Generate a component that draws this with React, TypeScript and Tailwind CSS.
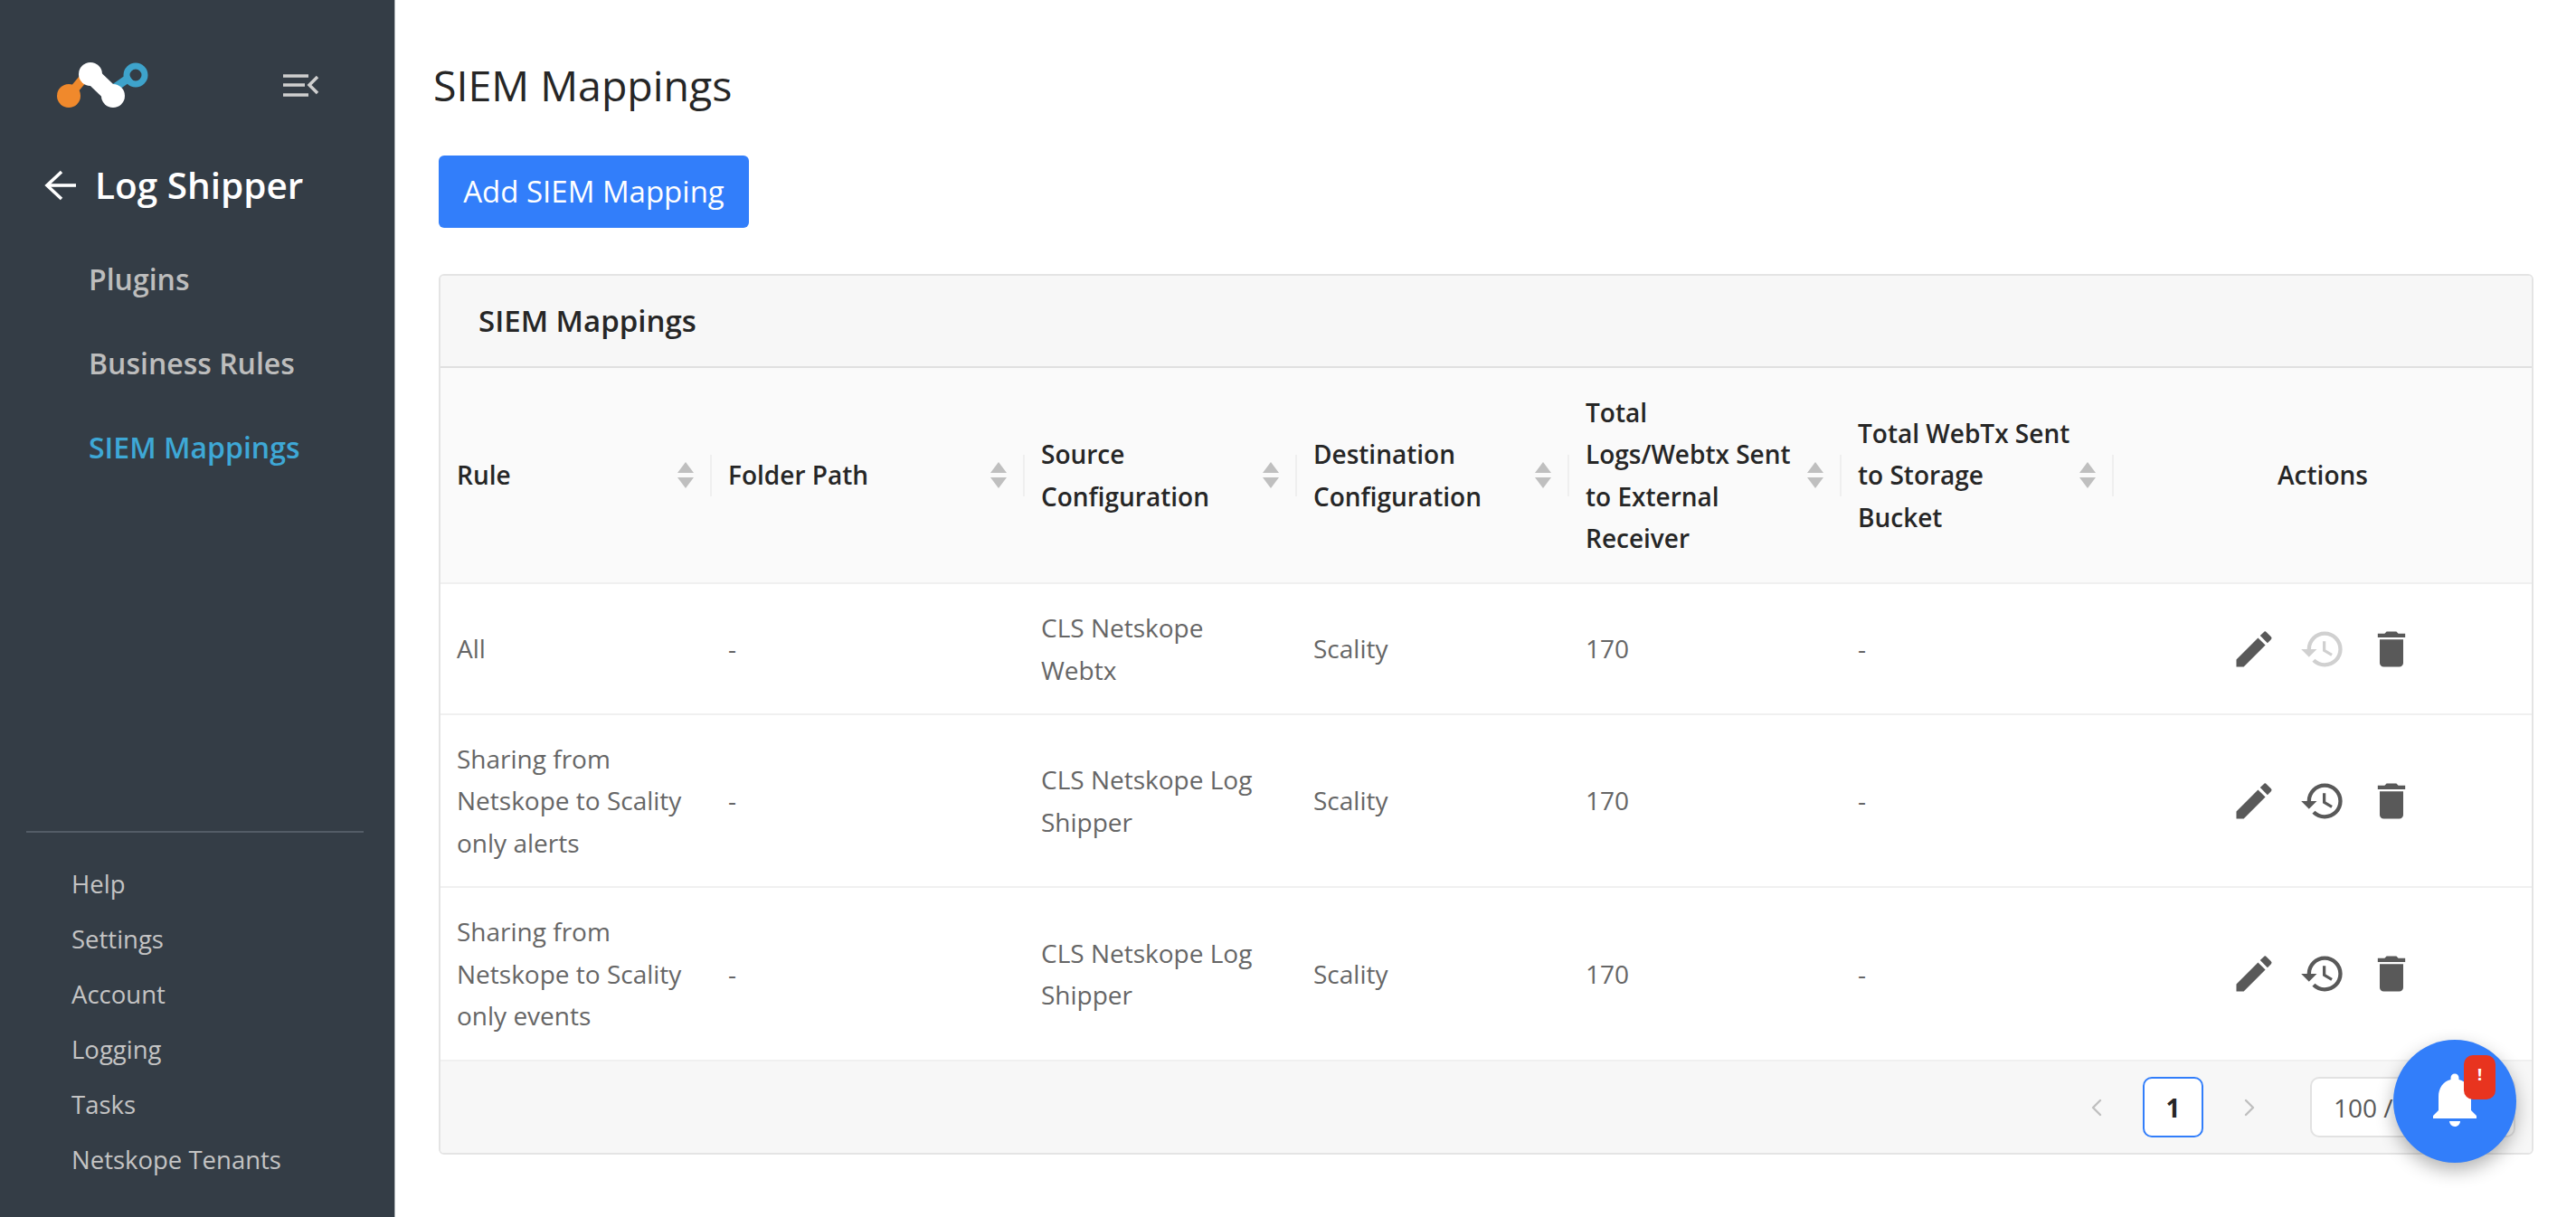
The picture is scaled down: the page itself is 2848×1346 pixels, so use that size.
import { ChevronDown, ChevronLeft, ChevronRight } from "lucide-react";
import { MdDelete, MdEdit, MdHistory, MdNotifications } from "react-icons/md";

const font = { fontFamily: '"Open Sans", sans-serif' };

const navItems = [
  { label: "Plugins" },
  { label: "Business Rules" },
  { label: "SIEM Mappings", active: true },
];

const bottomLinks = ["Help", "Settings", "Account", "Logging", "Tasks", "Netskope Tenants"];

const columns = [
  { label: ["Rule"], width: "w-[300px]" },
  { label: ["Folder Path"], width: "w-[346px]" },
  { label: ["Source", "Configuration"], width: "w-[301px]" },
  { label: ["Destination", "Configuration"], width: "w-[301px]" },
  { label: ["Total", "Logs/Webtx Sent", "to External", "Receiver"], width: "w-[301px]" },
  { label: ["Total WebTx Sent", "to Storage", "Bucket"], width: "w-[301px]" },
];

const rows = [
  { rule: ["All"], source: ["CLS Netskope", "Webtx"], historyDisabled: true, h: "h-[145px]" },
  { rule: ["Sharing from", "Netskope to Scality", "only alerts"], source: ["CLS Netskope Log", "Shipper"], h: "h-[191px]" },
  { rule: ["Sharing from", "Netskope to Scality", "only events"], source: ["CLS Netskope Log", "Shipper"], h: "h-[191px]" },
];

function Logo() {
  return (
    <svg width="106" height="52" viewBox="0 0 106 52" fill="none">
      <path d="M14 37 L30 18" stroke="#f0892c" strokeWidth="10" />
      <circle cx="14" cy="37" r="13" fill="#f0892c" />
      <path d="M82 16 L62 30" stroke="#3ea3cb" strokeWidth="9" />
      <circle cx="88" cy="14" r="10" stroke="#3ea3cb" strokeWidth="7" />
      <path d="M38 13 L63 37" stroke="#fff" strokeWidth="19" />
      <circle cx="38" cy="13" r="13" fill="#fff" />
      <circle cx="63" cy="37" r="13" fill="#fff" />
    </svg>
  );
}

function MenuCollapse() {
  return (
    <svg width="42" height="28" viewBox="0 0 42 28" fill="none" stroke="#cfcfcf" strokeWidth="3.5">
      <path d="M1 3h28M1 13h24M1 24h28" />
      <path d="M39 4l-9 9 9 9" />
    </svg>
  );
}

function BackArrow() {
  return (
    <svg width="36" height="34" viewBox="0 0 36 34" fill="none" stroke="#fff" strokeWidth="3.6">
      <path d="M35 17H3" />
      <path d="M19 2L3 17l16 15" />
    </svg>
  );
}

function Sidebar() {
  return (
    <aside className="flex h-full w-[437px] shrink-0 flex-col justify-between border-r border-[#aeb4b9] bg-[#343d46]">
      <div>
        <div className="flex items-center pl-[62px] pt-[69px]">
          <Logo />
          <div className="ml-[144px]">
            <MenuCollapse />
          </div>
        </div>
        <div className="mt-[56px] flex items-center pl-[49px] text-white">
          <BackArrow />
          <span className="ml-[20px] text-[40.5px] font-semibold leading-[56px]">Log Shipper</span>
        </div>
        <nav className="mt-[54px] flex flex-col gap-[50px] pl-[98px] text-[32px] font-semibold leading-[43px]">
          {navItems.map((item) => (
            <span key={item.label} className={item.active ? "text-[#3ea8d6]" : "text-[#bdbdbd]"}>
              {item.label}
            </span>
          ))}
        </nav>
      </div>
      <div className="pb-[43px]">
        <div className="ml-[29px] mr-[34px] h-[2px] bg-[#535c66]" />
        <ul className="mt-[37px] flex flex-col gap-[21px] pl-[79px] text-[27.5px] leading-[40px] text-[#c4c4c4]">
          {bottomLinks.map((link) => (
            <li key={link}>{link}</li>
          ))}
        </ul>
      </div>
    </aside>
  );
}

function SortArrows() {
  return (
    <span className="flex flex-col items-center gap-[5px]">
      <span className="h-0 w-0 border-x-[9px] border-b-[12px] border-x-transparent border-b-[#bfbfbf]" />
      <span className="h-0 w-0 border-x-[9px] border-t-[12px] border-x-transparent border-t-[#bfbfbf]" />
    </span>
  );
}

function Lines({ text }: { text: string[] }) {
  return (
    <>
      {text.map((line) => (
        <div key={line}>{line}</div>
      ))}
    </>
  );
}

function MappingsTable() {
  return (
    <table className="w-full table-fixed border-collapse text-[28px] leading-[46.5px]">
      <thead>
        <tr className="h-[238px] bg-[#fafafa] text-[#262626]">
          {columns.map((col) => (
            <th key={col.label.join(" ")} className={`relative px-[18px] text-left font-semibold ${col.width}`}>
              <div className="flex items-center justify-between">
                <div className="whitespace-nowrap">
                  <Lines text={col.label} />
                </div>
                <div className="mr-[2px]">
                  <SortArrows />
                </div>
              </div>
              <span className="absolute right-0 top-1/2 h-[46px] w-[2px] -translate-y-1/2 bg-[#efefef]" />
            </th>
          ))}
          <th className="text-center font-semibold">Actions</th>
        </tr>
      </thead>
      <tbody className="text-[#666666]">
        {rows.map((row) => (
          <tr key={row.rule.join(" ")} className={`border-t-2 border-[#f0f0f0] ${row.h}`}>
            <td className="px-[18px]">
              <Lines text={row.rule} />
            </td>
            <td className="px-[18px]">-</td>
            <td className="px-[18px]">
              <Lines text={row.source} />
            </td>
            <td className="px-[18px]">Scality</td>
            <td className="px-[18px]">170</td>
            <td className="px-[18px]">-</td>
            <td>
              <div className="flex items-center justify-center gap-[24px] text-[#595959]">
                <MdEdit size={52} />
                <MdHistory size={52} className={row.historyDisabled ? "text-[#d0d0d0]" : ""} />
                <MdDelete size={52} />
              </div>
            </td>
          </tr>
        ))}
      </tbody>
    </table>
  );
}

function Pagination() {
  return (
    <div className="flex h-[103px] items-center justify-end border-t-2 border-[#f0f0f0] bg-[#f7f7f7] pr-[18px]">
      <ChevronLeft className="h-[32px] w-[32px] text-[#bfbfbf]" strokeWidth={1.8} />
      <div className="ml-[35px] flex h-[67px] w-[67px] items-center justify-center rounded-[10px] border-2 border-[#327efa] bg-white text-[28px] font-bold text-[#262626]">
        1
      </div>
      <ChevronRight className="ml-[35px] h-[32px] w-[32px] text-[#bfbfbf]" strokeWidth={1.8} />
      <div className="ml-[51px] flex h-[67px] w-[227px] items-center justify-between rounded-[10px] border-2 border-[#e2e2e2] bg-white pl-[24px] pr-[18px] text-[28px] text-[#595959]">
        <span>100 / page</span>
        <ChevronDown className="h-[26px] w-[26px] text-[#bfbfbf]" />
      </div>
    </div>
  );
}

export default function App() {
  return (
    <div className="relative flex h-screen overflow-hidden bg-white" style={font}>
      <Sidebar />
      <main className="min-w-0 flex-1 pl-[48px] pr-[47px]">
        <h1 className="-ml-[6px] pt-[64px] text-[46.5px] font-normal leading-[60px] text-[#262626]">SIEM Mappings</h1>
        <button
          type="button"
          className="mt-[48px] flex h-[80px] w-[343px] items-center justify-center rounded-[6px] bg-[#327efa] text-[33px] text-white"
        >
          Add SIEM Mapping
        </button>
        <section className="mt-[51px] overflow-hidden rounded-[6px] border-2 border-[#e4e4e4]">
          <div className="flex h-[102px] items-center border-b-2 border-[#e0e0e0] bg-[#f7f7f7] pl-[42px] text-[33px] font-semibold text-[#262626]">
            SIEM Mappings
          </div>
          <MappingsTable />
          <Pagination />
        </section>
      </main>
      <button
        type="button"
        className="absolute bottom-[60px] right-[66px] flex h-[136px] w-[136px] items-center justify-center rounded-full bg-[#327efa] text-white shadow-[0_8px_20px_rgba(0,0,0,0.3)]"
      >
        <MdNotifications size={72} className="-mt-[4px]" />
        <span className="absolute right-[23px] top-[17px] flex h-[49px] w-[35px] items-center justify-center rounded-[10px] bg-[#e8341f] pb-[6px] text-[18px] font-bold text-white">
          !
        </span>
      </button>
    </div>
  );
}
